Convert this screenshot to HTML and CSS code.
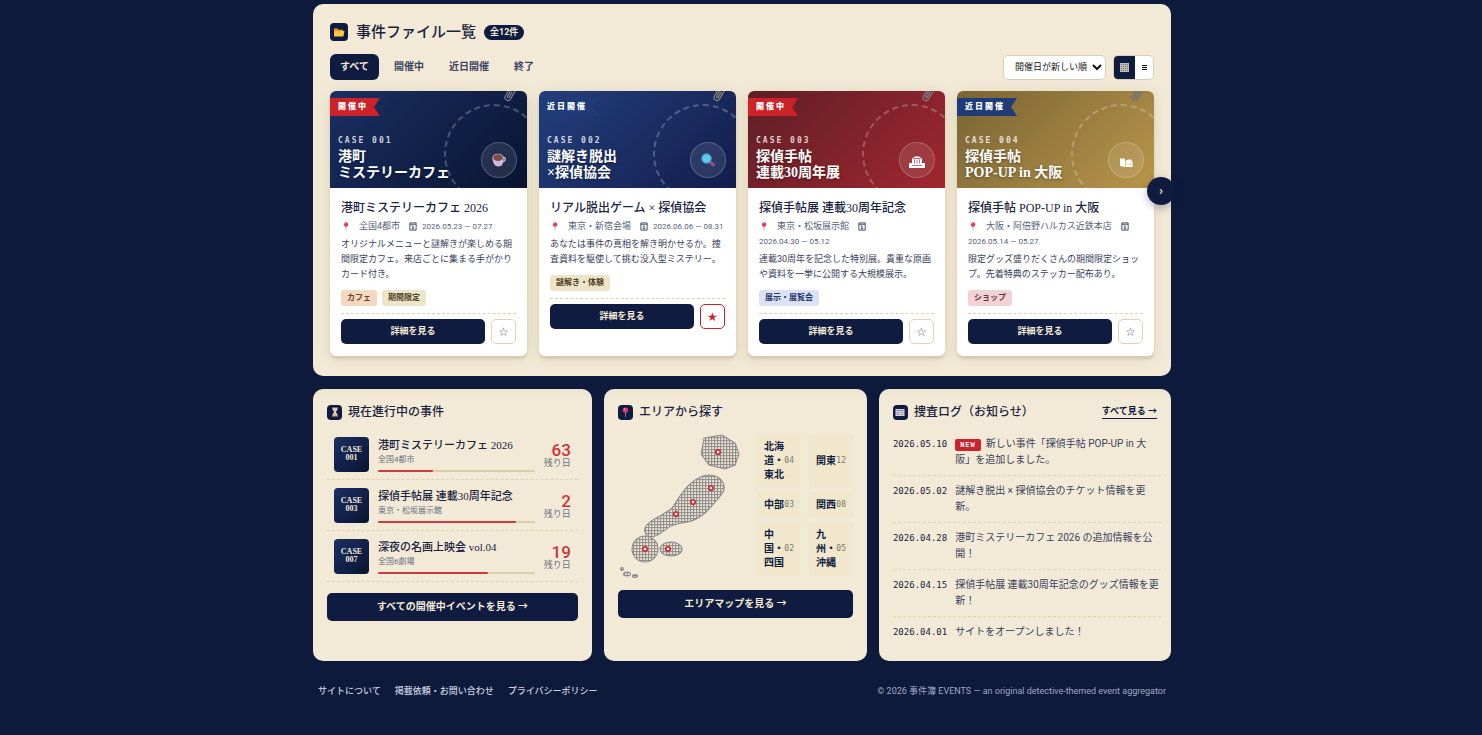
FILE: index.html
```html
<!DOCTYPE html>
<html lang="ja">
<head>
  <meta charset="UTF-8" />
  <meta name="viewport" content="width=device-width, initial-scale=1.0"/>
  <title>事件簿 EVENTS</title>
  <link rel="stylesheet" href="styles.css">
</head>
<body>
  <!-- shared icons -->
  <svg class="defs" aria-hidden="true">
    <symbol id="pin" viewBox="0 0 10 12">
      <path d="M4.4 5h1.2L5.3 11.6h-.6z" fill="#8b93a5"/>
      <circle cx="5" cy="3.4" r="3" fill="#e5315f"/>
      <circle cx="4" cy="2.4" r="1" fill="#ff9db5"/>
    </symbol>
    <symbol id="cal" viewBox="0 0 9 10">
      <path d="M1 1h7v8H1z" fill="none" stroke="#3a4563"/>
      <path d="M1 2.5h7M3 4.5h2M4.5 4.5v3M3 7.5h3" fill="none" stroke="#3a4563"/>
    </symbol>
    <symbol id="clip" viewBox="0 0 12 18">
      <path d="M3 5v8a3 3 0 0 0 6 0V4a2 2 0 0 0-4 0v8a1 1 0 0 0 2 0V6" fill="none" stroke="currentColor" stroke-width="1.2"/>
    </symbol>
  </svg>

  <main class="container">
    <section class="panel files">
      <div class="panel-head">
        <span class="icon icon-lg">
          <svg width="12" height="12" viewBox="0 0 12 12"><path d="M1 2.5h3.5l1 1.2H10V10H1z" fill="#e79b1c"/><path d="M1.600 5H11.400L10.400 10.400H1z" fill="#ffc83d"/></svg>
        </span>
        <h1>事件ファイル一覧</h1>
        <span class="count">全12件</span>
      </div>

      <div class="toolbar">
        <div class="tabs">
          <button class="tab active">すべて</button>
          <button class="tab">開催中</button>
          <button class="tab">近日開催</button>
          <button class="tab">終了</button>
        </div>
        <div class="tools">
          <select class="sort" aria-label="並び順">
            <option>開催日が新しい順</option>
            <option>開催日が古い順</option>
          </select>
          <div class="view">
            <button class="active" aria-label="グリッド表示">
              <svg width="9" height="9" viewBox="0 0 9 9"><path d="M0 0h9v9H0z" fill="#77797a"/><path d="M0 .5h9M0 2.500h9M0 4.500h9M0 6.500h9M0 8.500h9M.5 0v9M2.500 0v9M4.500 0v9M6.500 0v9M8.500 0v9" stroke="#c9c5b8" stroke-width=".8"/></svg>
            </button>
            <button aria-label="リスト表示">
              <svg width="5" height="7" viewBox="0 0 5 7"><path d="M0 1.500h5M0 3.500h5M0 5.500h5" stroke="#111"/></svg>
            </button>
          </div>
        </div>
      </div>

      <div class="slider">
        <div class="cards">
          <article class="card">
            <div class="cover navy">
              <svg class="clip"><use href="#clip"/></svg>
              <span class="ribbon red">開催中</span>
              <span class="emblem">
                <svg width="16" height="16" viewBox="0 0 16 16"><path d="M12 5.500c3-.8 3.400 4-1 4.200" fill="none" stroke="#cdbfe0" stroke-width="1.200"/><path d="M1.500 6h11c.4 5-1.500 8.500-5 8.500S1.500 11 1.500 6z" fill="#cbb9de"/><ellipse cx="7" cy="5.500" rx="5.500" ry="3.800" fill="#d8cbe6"/><ellipse cx="7" cy="5.700" rx="4.900" ry="3.400" fill="#7d4a46"/></svg>
              </span>
              <span class="case">CASE 001</span>
              <h2>港町<br>ミステリーカフェ</h2>
            </div>
            <div class="body">
              <h3>港町ミステリーカフェ 2026</h3>
              <p class="meta"><svg class="mi"><use href="#pin"/></svg><span class="place">全国4都市</span><svg class="mi"><use href="#cal"/></svg><span class="date">2026.05.23 — 07.27</span></p>
              <p class="desc">オリジナルメニューと謎解きが楽しめる期間限定カフェ。来店ごとに集まる手がかりカード付き。</p>
              <div class="tags"><span class="tag cafe">カフェ</span><span class="tag">期間限定</span></div>
              <div class="actions"><button class="btn">詳細を見る</button><button class="fav" aria-label="お気に入り">☆</button></div>
            </div>
          </article>

          <article class="card">
            <div class="cover blue">
              <svg class="clip gold-clip"><use href="#clip"/></svg>
              <span class="ribbon">近日開催</span>
              <span class="emblem">
                <svg width="16" height="16" viewBox="0 0 16 16"><path d="M10 10l3.500 3" stroke="#9b4d86" stroke-width="3" stroke-linecap="round"/><circle cx="6.500" cy="6.500" r="4.800" fill="#5cc9ec" stroke="#4789b8"/></svg>
              </span>
              <span class="case">CASE 002</span>
              <h2>謎解き脱出<br>×探偵協会</h2>
            </div>
            <div class="body">
              <h3>リアル脱出ゲーム × 探偵協会</h3>
              <p class="meta"><svg class="mi"><use href="#pin"/></svg><span class="place">東京・新宿会場</span><svg class="mi"><use href="#cal"/></svg><span class="date">2026.06.06 — 08.31</span></p>
              <p class="desc">あなたは事件の真相を解き明かせるか。捜査資料を駆使して挑む没入型ミステリー。</p>
              <div class="tags"><span class="tag">謎解き・体験</span></div>
              <div class="actions"><button class="btn">詳細を見る</button><button class="fav on" aria-label="お気に入り">★</button></div>
            </div>
          </article>

          <article class="card">
            <div class="cover crimson">
              <svg class="clip"><use href="#clip"/></svg>
              <span class="ribbon red">開催中</span>
              <span class="emblem">
                <svg class="low" width="16" height="14" viewBox="0 0 16 14"><path d="M3 3.500Q8-1 13 3.500V8h3v5H0V8h3z" fill="#fff"/><path d="M5.500 4.500v4M8 4.500v4M10.500 4.500v4M4 3.500h8M3 10.500h10" stroke="#a8505a" stroke-width=".8"/></svg>
              </span>
              <span class="case">CASE 003</span>
              <h2>探偵手帖<br>連載30周年展</h2>
            </div>
            <div class="body">
              <h3>探偵手帖展 連載30周年記念</h3>
              <p class="meta"><svg class="mi"><use href="#pin"/></svg><span class="place">東京・松坂展示館</span><svg class="mi"><use href="#cal"/></svg><span class="date">2026.04.30 — 05.12</span></p>
              <p class="desc">連載30周年を記念した特別展。貴重な原画や資料を一挙に公開する大規模展示。</p>
              <div class="tags"><span class="tag show">展示・展覧会</span></div>
              <div class="actions"><button class="btn">詳細を見る</button><button class="fav" aria-label="お気に入り">☆</button></div>
            </div>
          </article>

          <article class="card">
            <div class="cover gold">
              <svg class="clip blue-clip"><use href="#clip"/></svg>
              <span class="ribbon">近日開催</span>
              <span class="emblem">
                <svg class="low" width="14" height="14" viewBox="0 0 14 14"><path d="M1 2.500l1.500 1.500L5 3l1 2v7L1 11zM6.500 6L9 4.500h3L13.500 7v5h-7z" fill="#fff"/><path d="M8.500 9h1M11 9h1" stroke="#a98a45"/></svg>
              </span>
              <span class="case">CASE 004</span>
              <h2>探偵手帖<br>POP-UP in 大阪</h2>
            </div>
            <div class="body">
              <h3>探偵手帖 POP-UP in 大阪</h3>
              <p class="meta"><svg class="mi"><use href="#pin"/></svg><span class="place">大阪・阿倍野ハルカス近鉄本店</span><svg class="mi"><use href="#cal"/></svg><span class="date">2026.05.14 — 05.27</span></p>
              <p class="desc">限定グッズ盛りだくさんの期間限定ショップ。先着特典のステッカー配布あり。</p>
              <div class="tags"><span class="tag shop">ショップ</span></div>
              <div class="actions"><button class="btn">詳細を見る</button><button class="fav" aria-label="お気に入り">☆</button></div>
            </div>
          </article>
        </div>
        <button class="next" aria-label="次へ">›</button>
      </div>
    </section>

    <div class="columns">
      <section class="panel">
        <div class="panel-head">
          <span class="icon">
            <svg width="8" height="10" viewBox="0 0 8 10"><path d="M1.500 1h5v1.500L4.800 5l1.700 2.500V9h-5V7.500L3.200 5 1.500 2.500z" fill="#d7e4ee"/><path d="M2.500 3h3L4 5zM4 6l2 2.500H2z" fill="#f0b34a"/><path d="M1 .8h6M1 9.200h6" stroke="#b9784a"/></svg>
          </span>
          <h2>現在進行中の事件</h2>
        </div>
        <ul class="running">
          <li>
            <span class="thumb">CASE<br>001</span>
            <div class="info">
              <h3>港町ミステリーカフェ 2026</h3>
              <p>全国4都市</p>
              <div class="bar"><span style="width:35%"></span></div>
            </div>
            <div class="left"><b>63</b>残り日</div>
          </li>
          <li>
            <span class="thumb">CASE<br>003</span>
            <div class="info">
              <h3>探偵手帖展 連載30周年記念</h3>
              <p>東京・松坂展示館</p>
              <div class="bar"><span style="width:88%"></span></div>
            </div>
            <div class="left"><b>2</b>残り日</div>
          </li>
          <li>
            <span class="thumb">CASE<br>007</span>
            <div class="info">
              <h3>深夜の名画上映会 vol.04</h3>
              <p>全国6劇場</p>
              <div class="bar"><span style="width:70%"></span></div>
            </div>
            <div class="left"><b>19</b>残り日</div>
          </li>
        </ul>
        <button class="btn wide">すべての開催中イベントを見る →</button>
      </section>

      <section class="panel">
        <div class="panel-head">
          <span class="icon"><svg width="9" height="11"><use href="#pin"/></svg></span>
          <h2>エリアから探す</h2>
        </div>
        <div class="area">
          <svg class="map" viewBox="0 0 125 146">
            <defs>
              <pattern id="dots" width="3" height="3" patternUnits="userSpaceOnUse">
                <path d="M0 .5h3M.5 0v3" stroke="#8e8c8c" stroke-width="1"/>
              </pattern>
            </defs>
            <g fill="url(#dots)" stroke="#8c8b8e" stroke-width="1">
              <path d="M86 4L104 1L117 9L121 20L117 31L107 35L91 31L83 20Z"/>
              <path d="M91 41C101 41 107 48 106 55C105 60 101 63 98 67C92 74 89 79 80 84C70 90 60 88 51 93C44 98 39 103 33 103C27 102 25 96 28 92C32 85 46 81 54 74C60 66 64 56 73 49C79 44 85 41 91 41Z"/>
              <circle cx="27" cy="115" r="13"/>
              <ellipse cx="53" cy="115" rx="11" ry="7"/>
              <ellipse cx="9" cy="140" rx="3.500" ry="2"/>
              <ellipse cx="17" cy="142" rx="2.500" ry="1.500"/>
              <circle cx="4" cy="135" r="1.500"/>
            </g>
            <g fill="#fff" stroke="#cf2f3a" stroke-width="1.800">
              <circle cx="100" cy="18" r="2.200"/>
              <circle cx="93" cy="54" r="2.200"/>
              <circle cx="75" cy="68" r="2.200"/>
              <circle cx="58" cy="80" r="2.200"/>
              <circle cx="27" cy="115" r="2.200"/>
              <circle cx="50" cy="115" r="2.200"/>
            </g>
          </svg>
          <div class="regions">
            <button><span>北海道・東北</span><small>04</small></button>
            <button><span>関東</span><small>12</small></button>
            <button><span>中部</span><small>03</small></button>
            <button><span>関西</span><small>08</small></button>
            <button><span>中国・四国</span><small>02</small></button>
            <button><span>九州・沖縄</span><small>05</small></button>
          </div>
        </div>
        <button class="btn wide">エリアマップを見る →</button>
      </section>

      <section class="panel">
        <div class="panel-head">
          <span class="icon">
            <svg width="10" height="10" viewBox="0 0 10 10"><path d="M.5 2h9v7h-9z" fill="#d9d3e0"/><path d="M1.500 3.500h7" stroke="#8a859c"/><path d="M5.500 5.500h3M5.500 7.500h3" stroke="#a29cb0"/><path d="M1.500 5h3v3h-3z" fill="#a9a3b8"/></svg>
          </span>
          <h2>捜査ログ（お知らせ）</h2>
          <a class="more" href="#">すべて見る →</a>
        </div>
        <ul class="log">
          <li><time>2026.05.10</time><div class="entry"><span class="new">NEW</span>新しい事件「探偵手帖 POP-UP in 大阪」を追加しました。</div></li>
          <li><time>2026.05.02</time><div class="entry">謎解き脱出 × 探偵協会のチケット情報を更新。</div></li>
          <li><time>2026.04.28</time><div class="entry">港町ミステリーカフェ 2026 の追加情報を公開！</div></li>
          <li><time>2026.04.15</time><div class="entry">探偵手帖展 連載30周年記念のグッズ情報を更新！</div></li>
          <li><time>2026.04.01</time><div class="entry">サイトをオープンしました！</div></li>
        </ul>
      </section>
    </div>

    <footer>
      <nav>
        <a href="#">サイトについて</a>
        <a href="#">掲載依頼・お問い合わせ</a>
        <a href="#">プライバシーポリシー</a>
      </nav>
      <p>© 2026 事件簿 EVENTS — an original detective-themed event aggregator</p>
    </footer>
  </main>
</body>
</html>
```
FILE: styles.css
```css
*,
*::before {
  margin: 0;
  padding: 0;
  box-sizing: border-box;
}

:root {
  --navy: #0f1c3f;
  --cream: #f2ead7;
  --sand: #f0e7cd;
  --line: #e0d3ae;
  --red: #c8232f;
  --sans: Roboto, "Noto Sans CJK JP", sans-serif;
  --serif: "Liberation Serif", "Noto Sans CJK JP", serif;
  --mono: "DejaVu Sans Mono", "Noto Sans CJK JP", monospace;
}

body {
  background-color: #0e1a3c;
  color: #1a2340;
  font-family: var(--sans);
  font-size: 9px;
}

ul {
  list-style: none;
}

button {
  font-family: inherit;
  border: none;
  cursor: pointer;
}

.defs {
  position: absolute;
  width: 0;
  height: 0;
}

.container {
  max-width: 860px;
  margin: 0 auto;
  padding: 4px 0 36px 2px;
}

.panel {
  background: linear-gradient(#ece4d1, var(--cream) 9px);
  border-radius: 10px;
  padding: 14px;
}

.files {
  background: var(--cream);
  padding: 17px 17px 20px;
}

.panel-head {
  display: flex;
  align-items: center;
  gap: 6px;
  height: 18px;
  margin-bottom: 8px;
}

.panel-head h2 {
  font-family: var(--serif);
  font-size: 12px;
  line-height: 18px;
  font-weight: 500;
}

.files > .panel-head {
  gap: 8px;
  height: 22px;
  margin-bottom: 11px;
}

h1 {
  font-family: var(--serif);
  font-size: 15px;
  line-height: 22px;
  font-weight: 500;
}

.icon {
  display: grid;
  place-items: center;
  width: 15px;
  height: 15px;
  border-radius: 4px;
  background-color: var(--navy);
}

.icon-lg {
  width: 18px;
  height: 18px;
}

.count {
  padding: 0 6px;
  border-radius: 8px;
  background-color: var(--navy);
  color: var(--cream);
  font-weight: bold;
  line-height: 15px;
}

/* tabs + sort */
.toolbar {
  display: flex;
  justify-content: space-between;
  align-items: center;
  margin-bottom: 11px;
}

.tabs {
  display: flex;
  gap: 5px;
}

.tab {
  padding: 0 10px;
  border-radius: 6px;
  background-color: transparent;
  color: #3c4661;
  font-size: 10px;
  font-weight: bold;
  line-height: 26px;
}

.tab.active {
  background-color: var(--navy);
  color: var(--cream);
}

.tools {
  display: flex;
  gap: 7px;
}

.sort {
  width: 103px;
  height: 25px;
  padding: 0 0 0 7px;
  border: 1px solid #d9ceb4;
  border-radius: 5px;
  background-color: #fff;
  color: #111;
  font-family: inherit;
  font-size: 9px;
}

.view {
  display: flex;
  border: 1px solid #d9ceb4;
  border-radius: 5px;
  overflow: hidden;
}

.view button {
  display: grid;
  place-items: center;
  width: 18px;
  background-color: #fff;
}

.view .active {
  width: 21px;
  background-color: var(--navy);
}

/* cards */
.slider {
  position: relative;
}

.cards {
  display: grid;
  grid-template-columns: repeat(4, 1fr);
  gap: 12px;
}

.card {
  display: flex;
  flex-direction: column;
  border-radius: 6px;
  background-color: #fff;
  overflow: hidden;
  box-shadow: 0 3px 2px rgba(150, 130, 80, 0.22), 0 2px 14px rgba(150, 130, 80, 0.2);
}

.cover {
  position: relative;
  display: flex;
  flex-direction: column;
  justify-content: flex-end;
  height: 97px;
  padding: 0 8px 7px;
  color: #fff;
  overflow: hidden;
}

.cover::before {
  content: "";
  position: absolute;
  right: -17px;
  bottom: -16px;
  width: 100px;
  height: 100px;
  border: 2px dashed rgba(255, 255, 255, 0.24);
  border-radius: 50%;
}

.navy { background: linear-gradient(135deg, #1a2f63, #091431); }
.blue { background: linear-gradient(135deg, #243f7c, #121d4c); }
.crimson { background: linear-gradient(135deg, #5f1f26, #a0262f); }
.gold { background: linear-gradient(135deg, #7a6434, #b8954a); }

.clip {
  position: absolute;
  top: -6px;
  right: 11px;
  width: 12px;
  height: 18px;
  color: #7d808c;
  transform: rotate(30deg);
}

.gold-clip { color: #8c8878; }
.blue-clip { color: #6d7080; }

.ribbon {
  position: absolute;
  top: 7px;
  left: 0;
  padding: 0 12px 0 8px;
  background-color: #1f3c78;
  clip-path: polygon(0 0, 100% 0, calc(100% - 6px) 50%, 100% 100%, 0 100%);
  font-size: 8px;
  font-weight: 900;
  letter-spacing: 2px;
  line-height: 18px;
}

.ribbon.red {
  background-color: #cc2229;
}

.emblem {
  position: absolute;
  right: 10px;
  bottom: 10px;
  display: grid;
  place-items: center;
  width: 36px;
  height: 36px;
  border: 1px solid rgba(255, 255, 255, 0.2);
  border-radius: 50%;
  background-color: rgba(255, 255, 255, 0.1);
}

.low {
  margin-top: 4px;
}

.case {
  color: rgba(255, 255, 255, 0.8);
  font-family: var(--mono);
  font-size: 8px;
  font-weight: bold;
  letter-spacing: 2px;
  line-height: 16px;
}

.cover h2 {
  position: relative;
  font-family: var(--serif);
  font-size: 14px;
  font-weight: bold;
  line-height: 16px;
  text-shadow: 0 1px 3px rgba(0, 0, 0, 0.4);
}

.body {
  padding: 12px 11px;
}

.body h3 {
  margin-bottom: 2px;
  font-family: var(--serif);
  font-size: 12px;
  font-weight: 500;
  line-height: 17px;
  white-space: nowrap;
}

.meta {
  display: flex;
  flex-wrap: wrap;
  align-items: center;
  margin-bottom: 3px;
  color: #565f78;
  line-height: 15px;
}

.mi {
  width: 10px;
  height: 9px;
}

.place {
  margin: 0 8px;
}

.date {
  padding-left: 4px;
  font-size: 8px;
}

.card:nth-child(n+3) .date {
  padding-left: 0;
}

.desc {
  margin-bottom: 8px;
  color: #38415c;
  line-height: 15px;
}

.tags {
  display: flex;
  gap: 5px;
  margin-bottom: 7px;
}

.tag {
  padding: 0 6px;
  border-radius: 3px;
  background-color: #eee5c8;
  color: #4b4226;
  font-size: 8px;
  font-weight: bold;
  line-height: 16px;
}

.cafe { background-color: #f4d8c0; color: #6e4329; }
.show { background-color: #dbe2f5; color: #243868; }
.shop { background-color: #f2d3d5; color: #74303b; }

.actions {
  display: flex;
  gap: 6px;
  padding-top: 5px;
  border-top: 1px dashed var(--line);
}

.btn {
  flex: 1;
  border-radius: 5px;
  background-color: var(--navy);
  color: var(--cream);
  font-size: 9px;
  font-weight: bold;
  line-height: 25px;
}

.wide {
  display: block;
  width: 100%;
  font-size: 10px;
  line-height: 28px;
}

.fav {
  width: 25px;
  height: 25px;
  border: 1px solid var(--line);
  border-radius: 5px;
  background-color: #fff;
  color: #5b6379;
  font-family: "DejaVu Sans", sans-serif;
  font-size: 12px;
}

.fav.on {
  border-color: var(--red);
  color: var(--red);
}

.next {
  position: absolute;
  top: 86px;
  right: -21px;
  width: 28px;
  height: 28px;
  border-radius: 50%;
  background-color: var(--navy);
  color: var(--cream);
  font-size: 12px;
  font-weight: bold;
  box-shadow: 0 3px 8px rgba(15, 28, 63, 0.3);
}

/* lower row */
.columns {
  display: grid;
  grid-template-columns: 1.06fr 1fr 1.11fr;
  gap: 12px;
  margin-top: 13px;
}

.running {
  margin-bottom: 11px;
}

.running li {
  display: flex;
  gap: 9px;
  padding: 8px 7px 7px;
  border-bottom: 1px dashed var(--line);
}

.thumb {
  width: 35px;
  height: 35px;
  padding-top: 9px;
  border-radius: 4px;
  background: linear-gradient(135deg, #1a2f63, #091431);
  color: var(--cream);
  font-family: var(--serif);
  font-size: 8px;
  font-weight: bold;
  line-height: 8px;
  text-align: center;
}

.info {
  flex: 1;
}

.info h3 {
  font-family: var(--serif);
  font-size: 11px;
  font-weight: 500;
  line-height: 16px;
}

.info p {
  margin-bottom: 3px;
  color: #6a7084;
  font-size: 8px;
  line-height: 14px;
}

.bar {
  height: 2px;
  border-radius: 1px;
  background-color: #dacfab;
}

.bar span {
  display: block;
  height: 2px;
  border-radius: 1px;
  background-color: #d03a3c;
}

.left {
  padding-top: 5px;
  color: #6a7084;
  line-height: 11px;
  text-align: right;
}

.left b {
  display: block;
  color: #cc333a;
  font-size: 17px;
  font-weight: 500;
  line-height: 16px;
}

/* area map */
.area {
  display: grid;
  grid-template-columns: 1fr 96px;
  gap: 14px;
  margin-bottom: 10px;
  padding-top: 5px;
}

.map {
  display: block;
  width: 100%;
}

.regions {
  display: grid;
  grid-template-columns: 1fr 1fr;
  gap: 4px 8px;
  align-content: start;
}

.regions button {
  display: flex;
  align-items: center;
  justify-content: space-between;
  padding: 6px 7px;
  border-radius: 4px;
  background-color: var(--sand);
  color: var(--navy);
  font-size: 10px;
  font-weight: bold;
  line-height: 14px;
  text-align: left;
}

.regions small {
  color: #7a7a63;
  font-family: var(--mono);
  font-size: 8px;
  font-weight: normal;
}

/* log */
.more {
  margin-left: auto;
  border-bottom: 1px solid var(--navy);
  color: var(--navy);
  font-weight: bold;
  line-height: 13px;
  text-decoration: none;
}

.log {
  margin-right: -4px;
}

.log li {
  display: flex;
  gap: 8px;
  padding: 7px 0;
  border-bottom: 1px dashed var(--line);
  font-size: 10px;
  line-height: 16px;
}

.log li:last-child {
  border-bottom: none;
}

.entry {
  flex: 1;
  color: #38415c;
}

.log time {
  font-family: var(--mono);
  font-size: 9px;
}

.new {
  display: inline-block;
  margin-right: 5px;
  padding: 0 5px;
  border-radius: 2px;
  background-color: var(--red);
  color: #fff;
  font-family: var(--mono);
  font-size: 7px;
  font-weight: bold;
  letter-spacing: 1px;
  line-height: 12px;
}

footer {
  display: flex;
  justify-content: space-between;
  align-items: center;
  padding: 23px 5px 0;
  color: #a0a9c6;
  line-height: 15px;
}

footer nav {
  display: flex;
  gap: 14px;
}

footer a {
  color: #ccd1e2;
  font-weight: 500;
  text-decoration: none;
}

@media (max-width: 880px) {
  .cards,
  .columns {
    grid-template-columns: 1fr 1fr;
  }
}
```
